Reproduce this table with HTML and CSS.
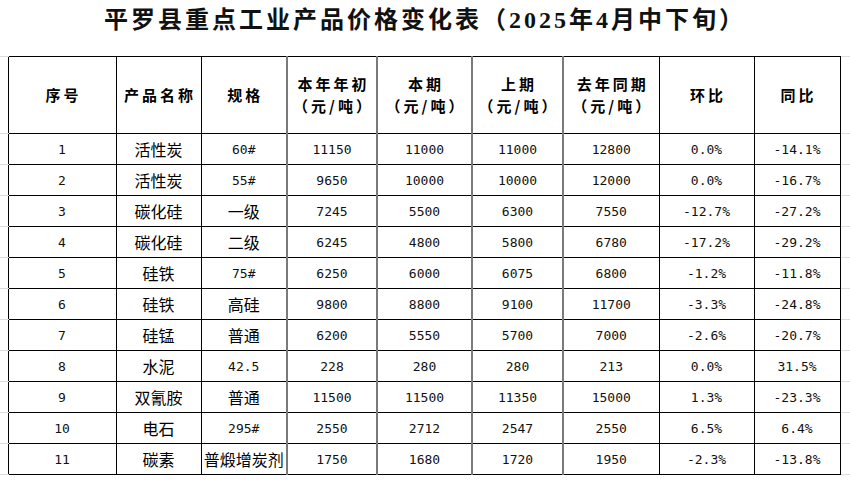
FILE: index.html
```html
<!DOCTYPE html>
<html lang="zh-CN">
<head>
<meta charset="utf-8">
<title>平罗县重点工业产品价格变化表</title>
<link rel="stylesheet" href="styles.css">
</head>
<body>
<h1 class="title">平罗县重点工业产品价格变化表（2025年4月中下旬）</h1>
<table class="sheet">
  <colgroup>
    <col class="c-gutl"><col class="c1"><col class="c2"><col class="c3"><col class="c4"><col class="c5"><col class="c6"><col class="c7"><col class="c8"><col class="c9"><col class="c-gutr">
  </colgroup>
  <thead>
    <tr class="head">
      <td class="gut"></td>
      <th>序号</th>
      <th>产品名称</th>
      <th>规格</th>
      <th class="g">本年年初<br>（元/吨）</th>
      <th class="g">本期<br>（元/吨）</th>
      <th class="g">上期<br>（元/吨）</th>
      <th class="g">去年同期<br>（元/吨）</th>
      <th>环比</th>
      <th>同比</th>
      <td class="gut"></td>
    </tr>
  </thead>
  <tbody>
    <tr><td class="gut"></td><td class="n">1</td><td class="t">活性炭</td><td class="n">60#</td><td class="n g">11150</td><td class="n g">11000</td><td class="n g">11000</td><td class="n g">12800</td><td class="n">0.0%</td><td class="n">-14.1%</td><td class="gut"></td></tr>
    <tr><td class="gut"></td><td class="n">2</td><td class="t">活性炭</td><td class="n">55#</td><td class="n g">9650</td><td class="n g">10000</td><td class="n g">10000</td><td class="n g">12000</td><td class="n">0.0%</td><td class="n">-16.7%</td><td class="gut"></td></tr>
    <tr><td class="gut"></td><td class="n">3</td><td class="t">碳化硅</td><td class="t">一级</td><td class="n g">7245</td><td class="n g">5500</td><td class="n g">6300</td><td class="n g">7550</td><td class="n">-12.7%</td><td class="n">-27.2%</td><td class="gut"></td></tr>
    <tr><td class="gut"></td><td class="n">4</td><td class="t">碳化硅</td><td class="t">二级</td><td class="n g">6245</td><td class="n g">4800</td><td class="n g">5800</td><td class="n g">6780</td><td class="n">-17.2%</td><td class="n">-29.2%</td><td class="gut"></td></tr>
    <tr><td class="gut"></td><td class="n">5</td><td class="t">硅铁</td><td class="n">75#</td><td class="n g">6250</td><td class="n g">6000</td><td class="n g">6075</td><td class="n g">6800</td><td class="n">-1.2%</td><td class="n">-11.8%</td><td class="gut"></td></tr>
    <tr><td class="gut"></td><td class="n">6</td><td class="t">硅铁</td><td class="t">高硅</td><td class="n g">9800</td><td class="n g">8800</td><td class="n g">9100</td><td class="n g">11700</td><td class="n">-3.3%</td><td class="n">-24.8%</td><td class="gut"></td></tr>
    <tr><td class="gut"></td><td class="n">7</td><td class="t">硅锰</td><td class="t">普通</td><td class="n g">6200</td><td class="n g">5550</td><td class="n g">5700</td><td class="n g">7000</td><td class="n">-2.6%</td><td class="n">-20.7%</td><td class="gut"></td></tr>
    <tr><td class="gut"></td><td class="n">8</td><td class="t">水泥</td><td class="n">42.5</td><td class="n g">228</td><td class="n g">280</td><td class="n g">280</td><td class="n g">213</td><td class="n">0.0%</td><td class="n">31.5%</td><td class="gut"></td></tr>
    <tr><td class="gut"></td><td class="n">9</td><td class="t">双氰胺</td><td class="t">普通</td><td class="n g">11500</td><td class="n g">11500</td><td class="n g">11350</td><td class="n g">15000</td><td class="n">1.3%</td><td class="n">-23.3%</td><td class="gut"></td></tr>
    <tr><td class="gut"></td><td class="n">10</td><td class="t">电石</td><td class="n">295#</td><td class="n g">2550</td><td class="n g">2712</td><td class="n g">2547</td><td class="n g">2550</td><td class="n">6.5%</td><td class="n">6.4%</td><td class="gut"></td></tr>
    <tr><td class="gut"></td><td class="n">11</td><td class="t">碳素</td><td class="t">普煅增炭剂</td><td class="n g">1750</td><td class="n g">1680</td><td class="n g">1720</td><td class="n g">1950</td><td class="n">-2.3%</td><td class="n">-13.8%</td><td class="gut"></td></tr>
  </tbody>
</table>
</body>
</html>
```

FILE: styles.css
```css
html, body {
  margin: 0;
  padding: 0;
  background: #ffffff;
}

body {
  width: 850px;
  color: #000000;
  font-family: "Noto Sans CJK SC", sans-serif;
}

.title {
  margin: 0;
  height: 40px;
  padding-bottom: 16px;
  line-height: 40px;
  text-align: center;
  font-family: "Liberation Serif", "Noto Sans CJK SC", serif;
  font-size: 24px;
  font-weight: 700;
  letter-spacing: 3px;
  color: #111111;
}

.sheet {
  border-collapse: collapse;
  table-layout: fixed;
  width: 850px;
}

.c-gutl { width: 8px; }
.c1 { width: 108px; }
.c2 { width: 85px; }
.c3 { width: 86px; }
.c4 { width: 90px; }
.c5 { width: 95px; }
.c6 { width: 91px; }
.c7 { width: 96px; }
.c8 { width: 95px; }
.c9 { width: 86px; }
.c-gutr { width: 10px; }

.sheet th,
.sheet td {
  border: 1px solid #000000;
  padding: 0;
  text-align: center;
  vertical-align: middle;
  white-space: nowrap;
  overflow: hidden;
}

.sheet td.gut {
  border: none;
  border-top: 1px solid #dcdcdc;
  border-bottom: 1px solid #dcdcdc;
}

.sheet .g {
  border-left: 2px solid #7a7a7a;
}

.head th,
.head td {
  height: 76px;
}

.head th {
  font-size: 15px;
  font-weight: 700;
  line-height: 22px;
  letter-spacing: 3px;
  padding-left: 3px;
}

.sheet tbody td {
  height: 30px;
}

.sheet td.t {
  font-family: "Noto Sans CJK SC", sans-serif;
  font-size: 16px;
}

.sheet td.n {
  font-family: "DejaVu Sans Mono", "Liberation Mono", monospace;
  font-size: 13px;
  color: #111111;
}
```
